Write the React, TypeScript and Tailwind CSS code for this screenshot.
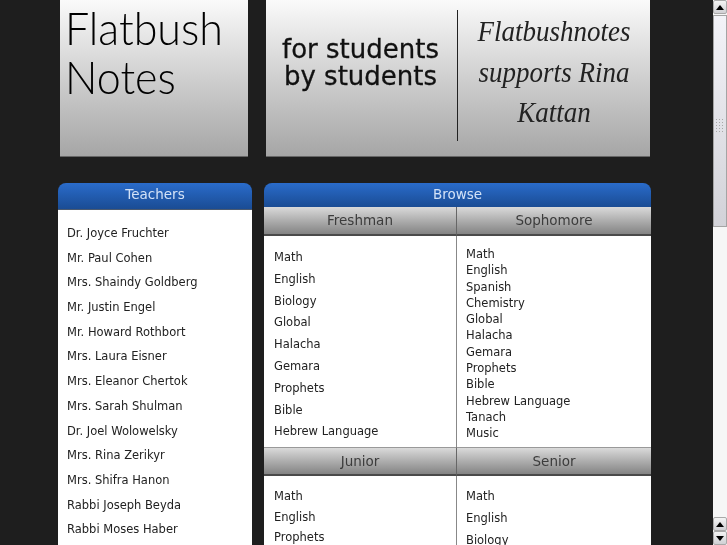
const teachers = [
  "Dr. Joyce Fruchter",
  "Mr. Paul Cohen",
  "Mrs. Shaindy Goldberg",
  "Mr. Justin Engel",
  "Mr. Howard Rothbort",
  "Mrs. Laura Eisner",
  "Mrs. Eleanor Chertok",
  "Mrs. Sarah Shulman",
  "Dr. Joel Wolowelsky",
  "Mrs. Rina Zerikyr",
  "Mrs. Shifra Hanon",
  "Rabbi Joseph Beyda",
  "Rabbi Moses Haber",
];

const freshman = ["Math", "English", "Biology", "Global", "Halacha", "Gemara", "Prophets", "Bible", "Hebrew Language"];
const sophomore = ["Math", "English", "Spanish", "Chemistry", "Global", "Halacha", "Gemara", "Prophets", "Bible", "Hebrew Language", "Tanach", "Music"];
const junior = ["Math", "English", "Prophets"];
const senior = ["Math", "English", "Biology"];

function ColumnHead({ label, divider, top }: { label: string; divider?: boolean; top?: boolean }) {
  return (
    <div
      className={`h-[29px] flex items-center justify-center bg-gradient-to-b from-[#dadada] to-[#848484] border-b-2 border-[#4a4a4a] text-[13.5px] text-[#3c3c3c] ${
        divider ? "border-r border-r-[#666]" : ""
      } ${top ? "border-t border-t-[#999]" : ""}`}
    >
      {label}
    </div>
  );
}

function ScrollButton({ up }: { up?: boolean }) {
  return (
    <div className="h-[14px] w-[14px] flex items-center justify-center bg-gradient-to-b from-[#f4f4f4] to-[#d0d0d4] border border-[#a9a9a9] rounded-[2px]">
      <div
        className={`w-0 h-0 border-l-[4px] border-r-[4px] border-l-transparent border-r-transparent ${
          up ? "border-b-[5px] border-b-black" : "border-t-[5px] border-t-black"
        }`}
      />
    </div>
  );
}

export default function App() {
  return (
    <div className="h-[545px] w-[727px] overflow-hidden flex bg-[#1e1e1e] font-['DejaVu_Sans',sans-serif]">
      <main className="w-[713px] pl-[58px] overflow-hidden will-change-transform">
        <div className="flex h-[157px] pl-[2px]">
          <div className="w-[188px] bg-gradient-to-b from-[#fafafa] to-[#a6a6a6] pl-[5px] border-b border-[#666]">
            <div className="font-['Lato',sans-serif] font-light text-[43px] leading-[47px] pt-[3px] text-black origin-top scale-y-105">
              <div>Flatbush</div>
              <div>Notes</div>
            </div>
          </div>
          <div className="w-[384px] ml-[18px] flex items-start bg-gradient-to-b from-[#fafafa] to-[#a6a6a6] border-b border-[#666]">
            <div className="w-[191px] pr-[2px] pt-[36px] text-center text-[26px] leading-[27px] text-[#111] [-webkit-text-stroke:0.3px_#111]">
              for students
              <br />
              by students
            </div>
            <div className="w-px h-[131px] mt-[10px] bg-[#222]" />
            <div className="flex-1 pt-[16px] text-center font-['Liberation_Serif',serif] italic text-[27px] leading-[37px] text-[#222] scale-y-110">
              Flatbushnotes
              <br />
              supports Rina
              <br />
              Kattan
            </div>
          </div>
        </div>

        <div className="flex items-start gap-[12px] mt-[26px]">
          <section className="w-[194px]">
            <div className="h-[27px] rounded-t-[8px] bg-gradient-to-b from-[#2a6ccb] to-[#1a4c94] border-b border-[#4a5a70] text-center text-[13.5px] leading-[22px] text-[#d3e2f7]">
              Teachers
            </div>
            <ul className="h-[340px] bg-white pt-[11px] pl-[9px] text-[11.5px] text-[#222]">
              {teachers.map((name) => (
                <li key={name} className="h-[24.7px] leading-[24.7px]">
                  {name}
                </li>
              ))}
            </ul>
          </section>

          <section className="w-[387px]">
            <div className="h-[24px] rounded-t-[8px] bg-gradient-to-b from-[#2a6ccb] to-[#1a4c94] text-center text-[13.5px] leading-[22px] text-[#d3e2f7]">
              Browse
            </div>
            <div className="grid grid-cols-[193px_194px]">
              <ColumnHead label="Freshman" divider />
              <ColumnHead label="Sophomore" />
              <ul className="h-[211px] bg-white border-r border-[#888] pt-[11px] pl-[10px] text-[11.5px] text-[#222]">
                {freshman.map((s) => (
                  <li key={s} className="h-[21.8px] leading-[21.8px]">
                    {s}
                  </li>
                ))}
              </ul>
              <ul className="h-[211px] bg-white pt-[10px] pl-[9px] text-[11.5px] text-[#222]">
                {sophomore.map((s) => (
                  <li key={s} className="h-[16.3px] leading-[16.3px]">
                    {s}
                  </li>
                ))}
              </ul>
              <ColumnHead label="Junior" divider top />
              <ColumnHead label="Senior" top />
              <ul className="h-[75px] bg-white border-r border-[#888] pt-[10px] pl-[10px] text-[11.5px] text-[#222]">
                {junior.map((s) => (
                  <li key={s} className="h-[20.5px] leading-[20.5px]">
                    {s}
                  </li>
                ))}
              </ul>
              <ul className="h-[75px] bg-white pt-[9px] pl-[9px] text-[11.5px] text-[#222]">
                {senior.map((s) => (
                  <li key={s} className="h-[22px] leading-[22px]">
                    {s}
                  </li>
                ))}
              </ul>
            </div>
          </section>
        </div>
      </main>

      <aside className="w-[14px] h-[545px] flex flex-col bg-[#f6f6f6]">
        <ScrollButton up />
        <div className="h-[212px] mt-[1px] flex items-center justify-center bg-gradient-to-b from-[#f3f3f8] to-[#d2d2d8] border border-[#a4a4a4]">
          <div className="w-[10px] h-[16px] mt-[10px] bg-[radial-gradient(#a8a8a8_1px,transparent_1px)] bg-[length:3px_3px]" />
        </div>
        <div className="flex-1" />
        <ScrollButton up />
        <ScrollButton />
      </aside>
    </div>
  );
}
